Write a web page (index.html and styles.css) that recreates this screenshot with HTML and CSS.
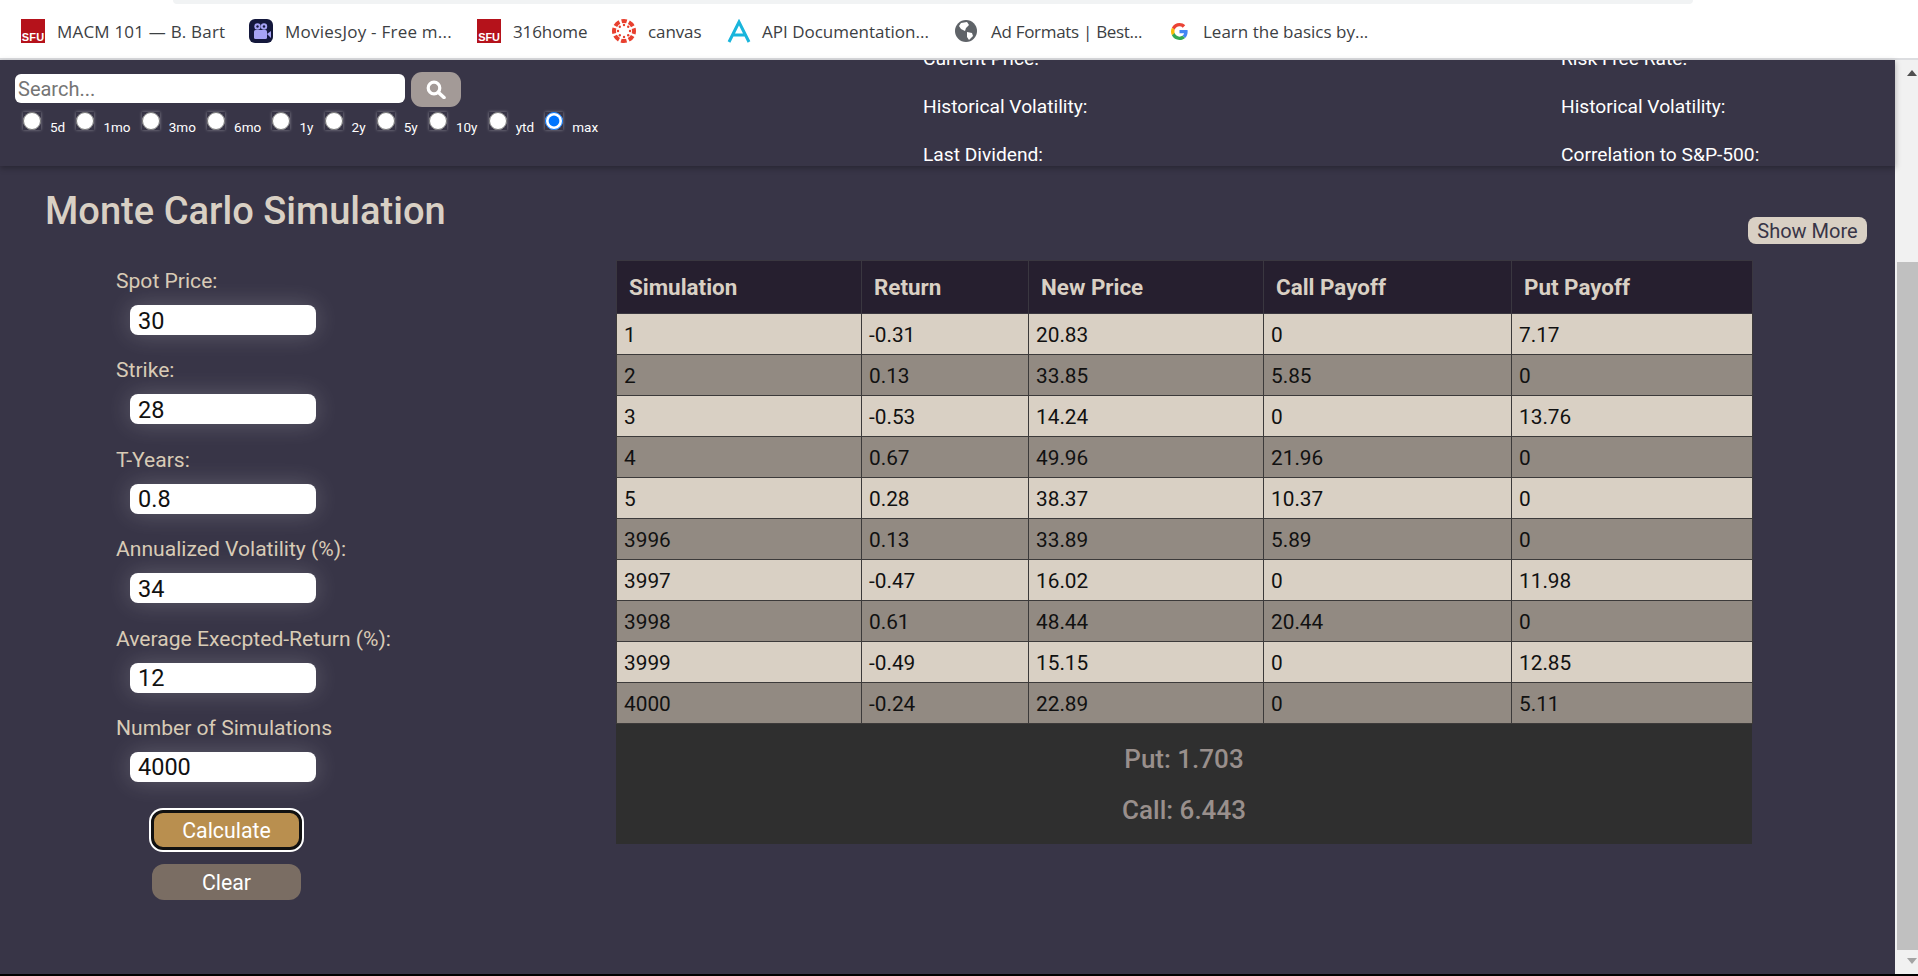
FILE: index.html
```html
<!DOCTYPE html>
<html>

<head>
    <title>Monte Carlo Simulation</title>
    <meta name="viewport" content="width=device-width, initial-scale=1.0">
    <link rel="stylesheet" href="styles.css">
</head>

<body>
    <!-- Browser bookmarks -->
    <div class="browser-bar">
        <div class="address-edge"></div>
        <div class="bookmarks">
            <a class="bookmark bm-macm">
                <svg class="bm-icon" width="24" height="24" viewBox="0 0 24 24">
                    <rect width="24" height="24" fill="#b5121b" />
                    <text x="12" y="22" class="sfu-text">SFU</text>
                </svg>
                <span>MACM 101 — B. Bart</span>
            </a>
            <a class="bookmark bm-movies">
                <svg class="bm-icon" width="24" height="24" viewBox="0 0 24 24">
                    <rect width="24" height="24" rx="6" fill="#14183c" />
                    <circle cx="8.5" cy="7.5" r="3.2" fill="#a6a3f5" />
                    <circle cx="15" cy="7.5" r="3.2" fill="#a6a3f5" />
                    <circle cx="8.5" cy="7.5" r="1.2" fill="#14183c" />
                    <circle cx="15" cy="7.5" r="1.2" fill="#14183c" />
                    <rect x="5" y="11" width="13" height="9" rx="1.5" fill="#a6a3f5" />
                    <path d="M18 15l4-3v7z" fill="#a6a3f5" />
                </svg>
                <span>MoviesJoy - Free m...</span>
            </a>
            <a class="bookmark bm-home">
                <svg class="bm-icon" width="24" height="24" viewBox="0 0 24 24">
                    <rect width="24" height="24" fill="#b5121b" />
                    <text x="12" y="22" class="sfu-text">SFU</text>
                </svg>
                <span>316home</span>
            </a>
            <a class="bookmark bm-canvas">
                <svg class="bm-icon" width="24" height="24" viewBox="0 0 24 24">
                    <circle cx="12" cy="12" r="10" fill="none" stroke="#e8402f" stroke-width="4" stroke-dasharray="5.6 2.25" stroke-dashoffset="2.8" transform="rotate(-90 12 12)" />
                    <g fill="#e8402f">
                        <circle cx="12" cy="6" r="1.2" />
                        <circle cx="16.2" cy="7.8" r="1.2" />
                        <circle cx="18" cy="12" r="1.2" />
                        <circle cx="16.2" cy="16.2" r="1.2" />
                        <circle cx="12" cy="18" r="1.2" />
                        <circle cx="7.8" cy="16.2" r="1.2" />
                        <circle cx="6" cy="12" r="1.2" />
                        <circle cx="7.8" cy="7.8" r="1.2" />
                    </g>
                </svg>
                <span>canvas</span>
            </a>
            <a class="bookmark bm-api">
                <svg class="bm-icon" width="24" height="24" viewBox="0 0 24 24">
                    <path d="M2 23L12 3l10 20M6 16h12" fill="none" stroke="#19b5dc" stroke-width="3" />
                </svg>
                <span>API Documentation...</span>
            </a>
            <a class="bookmark bm-ads">
                <svg class="bm-icon" width="22" height="22" viewBox="0 0 22 22">
                    <circle cx="11" cy="11" r="11" fill="#5f6368" />
                    <path d="M6 3l6-1 2 3-3 3-1 3-4-2-2-3zM12 12l5 1 1 3-4 4-2-3z" fill="#fff" />
                </svg>
                <span>Ad Formats | Best...</span>
            </a>
            <a class="bookmark bm-learn">
                <svg class="bm-icon" width="17" height="17" viewBox="0 0 48 48">
                    <path fill="#EA4335" d="M24 9.5c3.54 0 6.71 1.22 9.21 3.6l6.85-6.85C35.9 2.38 30.47 0 24 0 14.62 0 6.51 5.38 2.56 13.22l7.98 6.19C12.43 13.72 17.74 9.5 24 9.5z" />
                    <path fill="#4285F4" d="M46.98 24.55c0-1.57-.15-3.09-.38-4.55H24v9.02h12.94c-.58 2.96-2.26 5.48-4.78 7.18l7.73 6c4.51-4.18 7.09-10.36 7.09-17.65z" />
                    <path fill="#FBBC05" d="M10.53 28.59c-.48-1.45-.76-2.99-.76-4.59s.27-3.14.76-4.59l-7.98-6.19C.92 16.46 0 20.12 0 24c0 3.88.92 7.54 2.56 10.78l7.97-6.19z" />
                    <path fill="#34A853" d="M24 48c6.48 0 11.93-2.13 15.89-5.81l-7.73-6c-2.15 1.45-4.92 2.3-8.16 2.3-6.26 0-11.57-4.22-13.47-9.91l-7.98 6.19C6.51 42.62 14.62 48 24 48z" />
                </svg>
                <span>Learn the basics by...</span>
            </a>
        </div>
    </div>

    <div class="window">
        <div class="page">
            <!-- Search and stock summary -->
            <header class="top-bar">
                <div class="search-area">
                    <div class="search-row">
                        <input class="search-input" type="text" placeholder="Search...">
                        <button class="search-button" aria-label="Search">
                            <svg width="20" height="19" viewBox="0 0 20 19">
                                <circle cx="8" cy="8" r="5.8" fill="none" stroke="#fff" stroke-width="3.2" />
                                <path d="M12.5 12.5l5.5 5" stroke="#fff" stroke-width="3.6" stroke-linecap="round" />
                            </svg>
                        </button>
                    </div>
                    <div class="period-row">
                        <label class="period"><input type="radio" name="period"><span>5d</span></label>
                        <label class="period"><input type="radio" name="period"><span>1mo</span></label>
                        <label class="period"><input type="radio" name="period"><span>3mo</span></label>
                        <label class="period"><input type="radio" name="period"><span>6mo</span></label>
                        <label class="period"><input type="radio" name="period"><span>1y</span></label>
                        <label class="period"><input type="radio" name="period"><span>2y</span></label>
                        <label class="period"><input type="radio" name="period"><span>5y</span></label>
                        <label class="period"><input type="radio" name="period"><span>10y</span></label>
                        <label class="period"><input type="radio" name="period"><span>ytd</span></label>
                        <label class="period"><input type="radio" name="period" checked><span>max</span></label>
                    </div>
                </div>
                <div class="stat-col stat-stock">
                    <p>Current Price:</p>
                    <p>Historical Volatility:</p>
                    <p>Last Dividend:</p>
                </div>
                <div class="stat-col">
                    <p>Risk Free Rate:</p>
                    <p>Historical Volatility:</p>
                    <p>Correlation to S&amp;P-500:</p>
                </div>
            </header>

            <main class="content">
                <div class="title-row">
                    <h1>Monte Carlo Simulation</h1>
                    <button class="show-more">Show More</button>
                </div>

                <div class="sim-row">
                    <form class="sim-form">
                        <div class="field">
                            <label>Spot Price:</label>
                            <input type="text" value="30">
                        </div>
                        <div class="field">
                            <label>Strike:</label>
                            <input type="text" value="28">
                        </div>
                        <div class="field">
                            <label>T-Years:</label>
                            <input type="text" value="0.8">
                        </div>
                        <div class="field">
                            <label>Annualized Volatility (%):</label>
                            <input type="text" value="34">
                        </div>
                        <div class="field">
                            <label>Average Execpted-Return (%):</label>
                            <input type="text" value="12">
                        </div>
                        <div class="field">
                            <label>Number of Simulations</label>
                            <input type="text" value="4000">
                        </div>
                        <div class="form-buttons">
                            <button type="button" class="btn-calc">Calculate</button>
                            <button type="button" class="btn-clear">Clear</button>
                        </div>
                    </form>

                    <div class="results">
                        <table class="sim-table">
                            <colgroup>
                                <col class="col-sim">
                                <col class="col-return">
                                <col class="col-price">
                                <col class="col-call">
                                <col class="col-put">
                            </colgroup>
                            <thead>
                                <tr>
                                    <th>Simulation</th>
                                    <th>Return</th>
                                    <th>New Price</th>
                                    <th>Call Payoff</th>
                                    <th>Put Payoff</th>
                                </tr>
                            </thead>
                            <tbody>
                                <tr><td>1</td><td>-0.31</td><td>20.83</td><td>0</td><td>7.17</td></tr>
                                <tr><td>2</td><td>0.13</td><td>33.85</td><td>5.85</td><td>0</td></tr>
                                <tr><td>3</td><td>-0.53</td><td>14.24</td><td>0</td><td>13.76</td></tr>
                                <tr><td>4</td><td>0.67</td><td>49.96</td><td>21.96</td><td>0</td></tr>
                                <tr><td>5</td><td>0.28</td><td>38.37</td><td>10.37</td><td>0</td></tr>
                                <tr><td>3996</td><td>0.13</td><td>33.89</td><td>5.89</td><td>0</td></tr>
                                <tr><td>3997</td><td>-0.47</td><td>16.02</td><td>0</td><td>11.98</td></tr>
                                <tr><td>3998</td><td>0.61</td><td>48.44</td><td>20.44</td><td>0</td></tr>
                                <tr><td>3999</td><td>-0.49</td><td>15.15</td><td>0</td><td>12.85</td></tr>
                                <tr><td>4000</td><td>-0.24</td><td>22.89</td><td>0</td><td>5.11</td></tr>
                            </tbody>
                        </table>
                        <div class="prices">
                            <p>Put: 1.703</p>
                            <p>Call: 6.443</p>
                        </div>
                    </div>
                </div>
            </main>
        </div>

        <!-- Scrollbar -->
        <div class="scrollbar">
            <div class="arrow-up"></div>
            <div class="thumb"></div>
            <div class="arrow-down"></div>
        </div>
    </div>
    <div class="bottom-line"></div>
</body>

</html>
```

FILE: styles.css
```css
/* Basic styling */
html,
body {
    height: 100%;
}

body {
    margin: 0;
    display: flex;
    flex-direction: column;
    overflow: hidden;
    font-family: Roboto, Arial, sans-serif;
    background-color: #383547;
}

p {
    margin: 0;
}

/* Browser bar */
.browser-bar {
    height: 58px;
    flex-shrink: 0;
    background-color: #fff;
    border-bottom: 2px solid #dcdde0;
}

.address-edge {
    height: 4px;
    margin-left: 173px;
    width: 1520px;
    background-color: #f1f3f4;
    border-radius: 0 0 12px 12px;
}

.bookmarks {
    display: flex;
    align-items: center;
    height: 54px;
    padding-left: 21px;
    font-family: "Open Sans", sans-serif;
    font-size: 17px;
    color: #3c4043;
    white-space: nowrap;
}

.bookmark {
    display: flex;
    align-items: center;
}

.bm-macm { width: 228px; letter-spacing: 0.2px; }
.bm-movies { width: 228px; letter-spacing: 0.24px; }
.bm-home { width: 135px; letter-spacing: -0.1px; }
.bm-canvas { width: 115px; letter-spacing: -0.1px; }
.bm-api { width: 228px; }
.bm-ads { width: 216px; letter-spacing: -0.3px; }

.bm-macm span,
.bm-movies span,
.bm-home span {
    margin-left: 12px;
}

.bm-canvas span { margin-left: 12px; }
.bm-api span { margin-left: 11px; }
.bm-ads span { margin-left: 14px; }
.bm-learn span { margin-left: 15px; }

.bm-icon {
    flex-shrink: 0;
}

.sfu-text {
    font-family: "Liberation Sans", sans-serif;
    font-size: 11px;
    font-weight: 700;
    fill: #fff;
    text-anchor: middle;
}

/* Main window */
.window {
    flex: 1;
    display: flex;
    min-height: 0;
}

.page {
    flex: 1;
    min-width: 0;
}

.bottom-line {
    height: 2px;
    flex-shrink: 0;
    background-color: #000;
}

/* Top bar */
.top-bar {
    display: flex;
    height: 106px;
    padding-left: 15px;
    box-shadow: 0 2px 6px rgba(0, 0, 0, 0.3);
    position: relative;
}

.search-area {
    width: 908px;
    padding-top: 12px;
}

.search-row {
    display: flex;
    align-items: center;
    gap: 6px;
    height: 35px;
}

.search-input {
    width: 390px;
    height: 29px;
    margin-bottom: 2px;
    box-sizing: border-box;
    border: none;
    border-radius: 6px;
    padding: 0 3px;
    font-family: Roboto, sans-serif;
    font-size: 20px;
    background-color: #fff;
}

.search-button {
    width: 50px;
    height: 35px;
    border: none;
    border-radius: 11px;
    background-color: #a39a97;
    display: flex;
    align-items: center;
    justify-content: center;
    padding: 0;
}

.period-row {
    display: flex;
    gap: 11.2px;
    padding-left: 8px;
    margin-top: 5px;
}

.period {
    display: flex;
    align-items: flex-start;
    gap: 9px;
    font-size: 13.5px;
    color: #fff;
}

.period input {
    width: 18px;
    height: 18px;
    margin: 0;
    box-shadow: 0 0 3px rgba(255, 255, 255, 0.4);
    border-radius: 50%;
}

.period span {
    margin-top: 7px;
}

.stat-col {
    display: flex;
    flex-direction: column;
    justify-content: flex-end;
    gap: 24px;
    height: 106px;
    overflow: hidden;
    font-size: 19.2px;
    line-height: 24px;
    color: #fff;
}

.stat-col p:last-child {
    margin-bottom: -1px;
}

.stat-stock {
    width: 638px;
}

/* Simulation */
.content {
    padding: 23px 0 0 45px;
}

.title-row {
    display: flex;
    align-items: flex-start;
    height: 71px;
}

h1 {
    margin: 0;
    font-size: 38.1px;
    line-height: 44px;
    font-weight: 500;
    color: #d9d0c4;
}

.show-more {
    margin: 28px 28px 0 auto;
    width: 119px;
    height: 27px;
    padding: 0;
    border: none;
    border-radius: 8px;
    font-family: Roboto, sans-serif;
    font-size: 20px;
    color: #383547;
    background-color: #d9d0c4;
}

.sim-row {
    display: flex;
}

/* Form */
.sim-form {
    width: 500px;
    margin-left: 71px;
    padding-top: 9px;
    box-sizing: border-box;
    display: flex;
    flex-direction: column;
    gap: 23.4px;
}

.field {
    display: flex;
    flex-direction: column;
    gap: 12px;
}

.field label {
    font-size: 21.1px;
    line-height: 24px;
    color: #d8cbb6;
}

.field input {
    width: 186px;
    height: 30px;
    margin-left: 14px;
    padding: 1px 8px 0;
    box-sizing: border-box;
    border: none;
    border-radius: 8px;
    font-family: Roboto, sans-serif;
    font-size: 23.5px;
    color: #111;
    background-color: #fff;
    box-shadow: 0 0 24px rgba(255, 255, 255, 0.2);
}

.form-buttons {
    width: 221px;
    display: flex;
    flex-direction: column;
    align-items: center;
    gap: 14px;
    margin-top: 5px;
}

.form-buttons button {
    padding: 0;
    font-family: Roboto, sans-serif;
    font-size: 21.3px;
    color: #fff;
}

.btn-calc {
    width: 151px;
    height: 40px;
    border: 3px solid #111;
    border-radius: 12px;
    background-color: #b98f4f;
    box-shadow: 0 0 0 2px #fff;
}

.btn-clear {
    width: 149px;
    height: 36px;
    border: none;
    border-radius: 12px;
    background-color: #7a6d63;
}

/* Table */
.results {
    width: 1136px;
}

.sim-table {
    width: 100%;
    table-layout: fixed;
    border-collapse: collapse;
}

.col-sim { width: 245px; }
.col-return { width: 167px; }
.col-price { width: 235px; }
.col-call { width: 248px; }
.col-put { width: 241px; }

.sim-table th {
    height: 52px;
    padding: 0 0 0 12px;
    text-align: left;
    font-size: 22.4px;
    font-weight: 700;
    color: #d9d0c4;
    background-color: #261f2f;
    border: 1px solid #3a3740;
}

.sim-table td {
    height: 39px;
    padding: 1px 0 0 7px;
    font-size: 20.8px;
    color: #111;
    border: 1px solid #3c3a3a;
}

.sim-table tbody tr:nth-child(odd) {
    background-color: #d9d0c4;
}

.sim-table tbody tr:nth-child(even) {
    background-color: #928a82;
}

.prices {
    height: 120px;
    box-sizing: border-box;
    padding-top: 10px;
    background-color: #2f2f2f;
    text-align: center;
    font-size: 26px;
    font-weight: 500;
    line-height: 51px;
    color: #998f8c;
}

/* Scrollbar */
.scrollbar {
    width: 23px;
    flex-shrink: 0;
    display: flex;
    flex-direction: column;
    align-items: flex-end;
    background-color: #f1f1f1;
}

.arrow-up {
    width: 0;
    margin: 10px 1px 0 0;
    border-left: 5px solid transparent;
    border-right: 5px solid transparent;
    border-bottom: 6px solid #505050;
}

.thumb {
    width: 21px;
    height: 688px;
    margin-top: 186px;
    background-color: #c0c0c0;
}

.arrow-down {
    width: 0;
    margin: 8px 1px 0 0;
    border-left: 5px solid transparent;
    border-right: 5px solid transparent;
    border-top: 6px solid #a3a3a3;
}
```
